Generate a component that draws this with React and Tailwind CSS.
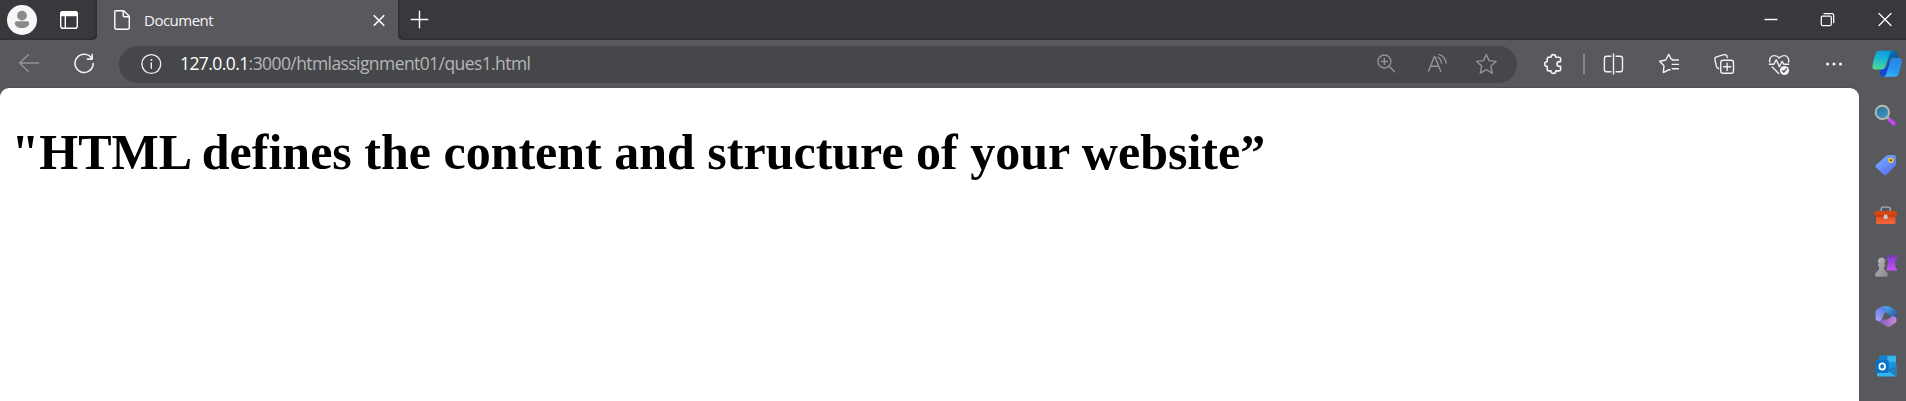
import React from "react";

function Icon({ className = "", children, width = 1.4 }) {
  return (
    <svg
      viewBox="0 0 24 24"
      className={`h-6 w-6 shrink-0 ${className}`}
      fill="none"
      stroke="currentColor"
      strokeWidth={width}
      strokeLinecap="round"
      strokeLinejoin="round"
    >
      {children}
    </svg>
  );
}

const STAR = "M12.3 2.5 L15.1 8.6 L22 9.4 L16.9 14.1 L18.3 21.2 L12.3 17.7 L6.3 21.2 L7.7 14.1 L2.6 9.4 L9.5 8.6 Z";

function TabStrip() {
  return (
    <div className="flex h-10 items-stretch bg-[#58595d] text-white">
      <div className="flex w-[97px] items-center rounded-br-[5px] bg-[#38393c] pl-[7px] shadow-[inset_-2px_-2px_2px_-1px_#2c2d30]">
        <svg viewBox="0 0 30 30" className="h-[30px] w-[30px] shrink-0">
          <circle cx="15" cy="15" r="15" fill="#f7f7f7" />
          <circle cx="15" cy="10.6" r="4.9" fill="#8a8a8a" />
          <path d="M9.7 16.2H20.3Q22.2 16.2 22.2 18C22.2 21.2 19 23 15 23S7.8 21.2 7.8 18Q7.8 16.2 9.7 16.2Z" fill="#8a8a8a" />
        </svg>
        <Icon className="ml-5">
          <rect x="3.7" y="3.7" width="16.6" height="16.6" rx="2.4" />
          <path d="M3.7 7.5V6Q3.7 3.7 6 3.7H18Q20.3 3.7 20.3 6V7.5Z" fill="currentColor" />
          <path d="M8.3 8V20" />
        </Icon>
      </div>
      <div className="flex w-[301px] items-center rounded-t-[5px] bg-[#58595d]">
        <Icon className="ml-[13px]">
          <path d="M5.8 2.7H13.7L19.3 8.3V19.3Q19.3 21.3 17.3 21.3H6.8Q4.8 21.3 4.8 19.3V3.7Q4.8 2.7 5.8 2.7ZM13.2 2.9V7.6Q13.2 8.8 14.4 8.8H19.1" />
        </Icon>
        <span className="ml-[10px] -translate-y-[0.5px] whitespace-nowrap font-['Open_Sans',sans-serif] text-[15px] leading-none tracking-[-0.5px] text-[#f5f5f5]">
          Document
        </span>
        <Icon className="mr-[7.5px] ml-auto translate-y-[0.5px]" width={1.6}>
          <path d="M7.2 7.2L16.8 16.8M16.8 7.2L7.2 16.8" />
        </Icon>
      </div>
      <div className="flex flex-1 items-center rounded-bl-[5px] bg-[#38393c] shadow-[inset_2px_-2px_2px_-1px_#2c2d30]">
        <Icon className="ml-[9px]">
          <path d="M12.5 3.3V19.7M4.2 11.5H20.8" />
        </Icon>
        <div className="mr-[9px] ml-auto flex gap-[33px]">
          <Icon className="-ml-px">
            <path d="M5.5 11.5H18.5" strokeLinecap="butt" />
          </Icon>
          <Icon width={1.25}>
            <rect x="5.3" y="8" width="10" height="9.5" rx="1.2" />
            <path d="M8 5.6H16Q17.7 5.6 17.7 7.3V14.7" />
          </Icon>
          <Icon width={1.25}>
            <path d="M6 5.5L18 17.5M18 5.5L6 17.5" />
          </Icon>
        </div>
      </div>
    </div>
  );
}

function AddressBar() {
  return (
    <div className="ml-[23px] flex h-[37px] w-[1398px] shrink-0 items-center rounded-full bg-[#46474a] pr-[19px] pl-5 text-[#929395]">
      <Icon className="text-[#ededed]">
        <circle cx="12.3" cy="12" r="9.4" />
        <path d="M12.3 11V16.2" />
        <circle cx="12.3" cy="7.9" r="0.5" fill="currentColor" strokeWidth="1" />
      </Icon>
      <span className="ml-[17px] whitespace-nowrap font-['Open_Sans',sans-serif] text-[17.5px] leading-none tracking-[-0.58px] text-[#b5b6b8]">
        <span className="text-white">127.0.0.1</span>:3000/htmlassignment01/ques1.html
      </span>
      <Icon className="ml-auto">
        <circle cx="10.4" cy="9.5" r="6.5" />
        <path d="M15.2 14.3L20.5 19.7M7.4 9.5H13.4M10.4 6.5V12.5" />
      </Icon>
      <Icon className="ml-[27px]">
        <path d="M3.5 19.2L9.3 4.7H9.9L15.7 19.2M5.6 14.3H13.5M12.9 5.4Q16 6.7 16.5 11M14.2 2.3Q20.3 4.4 21.1 11" />
      </Icon>
      <Icon className="ml-[25px]">
        <path d={STAR} />
      </Icon>
    </div>
  );
}

function CopilotLogo() {
  return (
    <svg viewBox="0 0 32 32" className="ml-[25px] h-8 w-8 shrink-0">
      <defs>
        <linearGradient id="cpA" x1="0.6" y1="0" x2="0.3" y2="1">
          <stop offset="0" stopColor="#0e9bdf" />
          <stop offset="0.4" stopColor="#17b3d3" />
          <stop offset="1" stopColor="#4ddb95" />
        </linearGradient>
        <linearGradient id="cpB" x1="0.7" y1="0" x2="0.3" y2="1">
          <stop offset="0" stopColor="#2a84e6" />
          <stop offset="0.6" stopColor="#2897ef" />
          <stop offset="1" stopColor="#35b8fa" />
        </linearGradient>
        <linearGradient id="cpC" x1="0" y1="0" x2="1" y2="1">
          <stop offset="0" stopColor="#0878bd" />
          <stop offset="1" stopColor="#084f92" />
        </linearGradient>
      </defs>
      <path d="M17 2.7H22Q25 2.7 26 5.7L27.2 10H21.5Q19.5 10 18.8 11.2L16.6 18Z" fill="url(#cpC)" />
      <path d="M8.6 20.3H12.5Q15.3 20.3 16 18L18 12 19.6 20 17.5 26Q16.6 28.8 13.7 28.8H12.8Q10 28.8 9.2 26Z" fill="#1746cf" />
      <path d="M8.2 2.7H22Q19.7 2.7 18.8 5.2L14.5 18.6Q13.6 21.6 10.3 21.6H4.4Q.8 21.6 1.5 17.5Q2.6 11.8 4.5 6Q5.5 2.7 8.2 2.7Z" fill="url(#cpA)" />
      <path d="M23.8 28.8H11.7Q14.4 28.8 15.3 26L19.3 13Q20.2 10 23.3 10H27.7Q31.6 10 30.8 14Q29.7 19.5 27.8 25.5Q26.8 28.8 23.8 28.8Z" fill="url(#cpB)" />
    </svg>
  );
}

function Toolbar() {
  return (
    <div className="flex h-12 items-center bg-[#58595d] pl-[17px] text-[#f2f2f2]">
      <Icon className="text-[#929396]">
        <path d="M21.7 11H2.7M11.2 2.7L2.7 11L11.2 19.5" />
      </Icon>
      <Icon className="ml-[31px]" width={1.6}>
        <path d="M19.8 6.5A9.1 9.1 0 1 0 21.2 11.5M20.2 2.5V7.1H15.4" />
      </Icon>
      <AddressBar />
      <Icon className="ml-6" width={1.6}>
        <path d="M6.8 5.2H10Q10 2.6 12.4 2.6T14.8 5.2H17.9Q19.6 5.2 19.6 6.9V9.6H18.4Q16 9.6 16 12T18.4 14.4H19.6V17.2Q19.6 18.9 17.9 18.9H14.8Q14.8 21.4 12.4 21.4T10 18.9H7.9Q6.2 18.9 6.2 17.2V14.3Q3.6 14.3 3.6 12T6.2 9.7V6.9Q6.2 5.2 7.9 5.2" />
      </Icon>
      <div className="ml-[18px] h-5 w-[1.5px] shrink-0 bg-[#88898c]" />
      <Icon className="ml-[16.5px]">
        <path d="M12.5 2V22M9.8 4.2H5.8Q3.4 4.2 3.4 6.6V17.4Q3.4 19.8 5.8 19.8H9.8M15.1 4.2H19.1Q21.5 4.2 21.5 6.6V17.4Q21.5 19.8 19.1 19.8H15.1" />
      </Icon>
      <Icon className="ml-8">
        <path d="M15.8 7.4L14.2 7.2L11.8 2.3L8.7 8L2.7 9.2L7 13.7L6.3 20.5L12.2 17.7L13 18M15.3 8H21.5M15.3 12.4H21.5M15.3 16.8H21.5" />
      </Icon>
      <Icon className="ml-[31px]">
        <rect x="8.7" y="8.3" width="12.8" height="13" rx="2.3" />
        <path d="M15.1 11.2V18.4M11.5 14.8H18.7M6.6 16.5Q4.9 16 4.4 14.2L2.9 7.7Q2.5 5.5 4.5 4.9L12 2.7Q14.5 2.1 15 4.4L15.3 5.5" />
      </Icon>
      <Icon className="ml-[31px]">
        <path d="M2.7 10C2.1 6 4.3 3.6 7.2 3.6C9.6 3.6 11.2 4.6 12.2 6C13.2 4.6 14.8 3.6 17.2 3.6C20.2 3.6 22.2 6 21.6 10M2.4 12.2H6.9L9.2 7.8L12.4 14.7L15.2 9.3L16.7 12.2H21.7M5.2 15L11.7 21.4" />
        <circle cx="17.5" cy="18.5" r="4.6" fill="currentColor" strokeWidth="0" />
        <path d="M15.5 18.7L16.8 20L19.5 17.1" stroke="#58595d" />
      </Icon>
      <Icon className="ml-[31px]" width={0}>
        <g fill="currentColor">
          <circle cx="5.6" cy="12" r="1.6" />
          <circle cx="12" cy="12" r="1.6" />
          <circle cx="18.5" cy="12" r="1.6" />
        </g>
      </Icon>
      <CopilotLogo />
    </div>
  );
}

function SidebarIcon({ children }) {
  return (
    <svg viewBox="0 0 24 24" className="h-6 w-6 shrink-0">
      {children}
    </svg>
  );
}

function Sidebar() {
  return (
    <aside className="flex w-[47px] shrink-0 flex-col gap-[26.3px] bg-[#58595d] pt-[15.5px] pl-[15px]">
      <SidebarIcon>
        <defs>
          <linearGradient id="lens" x1="0" y1="0" x2="0.6" y2="1">
            <stop offset="0" stopColor="#246b8c" />
            <stop offset="1" stopColor="#3e99c4" />
          </linearGradient>
        </defs>
        <path d="M13.5 13.5L16 16" stroke="#a5a5a5" strokeWidth="3" />
        <path d="M16.3 16.2L19.7 19.5" stroke="#c543f4" strokeWidth="4" strokeLinecap="round" />
        <circle cx="8.4" cy="8.4" r="6.7" fill="url(#lens)" stroke="#b8b8b7" strokeWidth="2" />
      </SidebarIcon>
      <SidebarIcon>
        <defs>
          <linearGradient id="tag" x1="0" y1="0" x2="1" y2="1">
            <stop offset="0" stopColor="#77b5ff" />
            <stop offset="1" stopColor="#5865ed" />
          </linearGradient>
        </defs>
        <path d="M12.5 1.8Q13.2 1.1 14.2 1.1L20 1Q22 1 22 3V10Q22 11 21.2 11.8L12.8 20.4Q11.2 22 9.6 20.4L2.2 13.7Q.6 12.1 2.2 10.7Z" fill="url(#tag)" />
        <circle cx="16.8" cy="6.2" r="1.9" fill="#333" stroke="#f4c62b" strokeWidth="1.7" />
      </SidebarIcon>
      <SidebarIcon>
        <defs>
          <linearGradient id="box" x1="0" y1="0" x2="0" y2="1">
            <stop offset="0" stopColor="#d34415" />
            <stop offset="1" stopColor="#f3683d" />
          </linearGradient>
        </defs>
        <path d="M7.2 7.4V4.8Q7.2 3.1 9 3.1H14.5Q16.3 3.1 16.3 4.8V7.4" fill="none" stroke="#a9abae" strokeWidth="1.4" />
        <rect x="2" y="9" width="19.5" height="11" rx="1.4" fill="url(#box)" />
        <rect x="0.6" y="7" width="22.3" height="5.2" rx="1" fill="#d74413" />
        <path d="M1.2 12H22.3" stroke="#a93005" strokeWidth="0.8" />
        <rect x="9.7" y="10.5" width="4" height="4.7" rx="1.8" fill="#c9c6c4" />
      </SidebarIcon>
      <SidebarIcon>
        <defs>
          <linearGradient id="rook" x1="0" y1="0" x2="0" y2="1">
            <stop offset="0" stopColor="#7d37c4" />
            <stop offset="1" stopColor="#c752fa" />
          </linearGradient>
          <linearGradient id="pawn" x1="0" y1="0" x2="1" y2="1">
            <stop offset="0" stopColor="#c0c0c0" />
            <stop offset="1" stopColor="#858585" />
          </linearGradient>
        </defs>
        <path d="M13 1H15.6V3.7H16.8V1H19.4V3.7H20.6V1H23.2V5.8L21 7.8L21.6 13.5L23 15V16.5H12.5L14.2 7.8L13 5.8Z" fill="url(#rook)" />
        <path d="M7.6 3.4A3.8 3.8 0 0 1 9.9 10.2H11.2V12.4H9.8Q9.8 15 11.3 16.8L13.8 19.5V21.3Q13.8 22.7 12.4 22.7H2.7Q1.3 22.7 1.3 21.3V19.5L3.9 16.8Q5.4 15 5.4 12.4H4V10.2H5.3A3.8 3.8 0 0 1 7.6 3.4Z" fill="url(#pawn)" />
      </SidebarIcon>
      <SidebarIcon>
        <defs>
          <linearGradient id="m1" x1="0.8" y1="0" x2="0.2" y2="1">
            <stop offset="0" stopColor="#5579dc" />
            <stop offset="1" stopColor="#a5a2f8" />
          </linearGradient>
          <linearGradient id="m2" x1="0" y1="0" x2="1" y2="1">
            <stop offset="0" stopColor="#46baf0" />
            <stop offset="1" stopColor="#24439d" />
          </linearGradient>
          <linearGradient id="m3" x1="0" y1="0" x2="1" y2="0">
            <stop offset="0" stopColor="#7b52b1" />
            <stop offset="1" stopColor="#c689dc" />
          </linearGradient>
        </defs>
        <path d="M9.2 1.2H14.2Q15.3 1.2 16.3 1.8L21 4.7Q22.5 5.6 22.5 7.4V15.3L16.3 13V10.3L9.2 6Z" fill="url(#m2)" />
        <path d="M9.2 1.2Q12.4 3 11.4 6.2L7.8 14.4Q6.2 17.3 3.2 15.8Q1.6 15 1.6 13.1V7Q1.6 5.2 3.1 4.3L7.5 1.6Q8.3 1.2 9.2 1.2Z" fill="url(#m1)" />
        <path d="M3 15.7Q6.2 16.8 7.8 14.4H13L18.6 11.3Q22.5 11.7 22.5 14.5V15.4Q22.5 17 21.2 17.9L16.5 21.2Q14.8 22.4 12.9 21.4Z" fill="url(#m3)" />
      </SidebarIcon>
      <SidebarIcon>
        <rect x="5" y="0.7" width="17" height="16" rx="1.2" fill="#1490df" />
        <path d="M5 1.9Q5 .7 6.2 .7H13.5V7H5Z" fill="#1683cf" />
        <path d="M13.5 .7H20.8Q22 .7 22 1.9V7H13.5Z" fill="#32b7ef" />
        <path d="M13.5 7H22V12H13.5Z" fill="#1a93dc" />
        <path d="M3 11L14 15.5L22.3 10.5V20Q22.3 21.5 20.8 21.5H4.5Q3 21.5 3 20Z" fill="#35b5ee" />
        <path d="M13.2 15.2L22.3 10.5V20Q22.3 21 21.7 21.2Z" fill="#1f82c0" />
        <rect x="1.7" y="5" width="13" height="13" rx="1.2" fill="#0872c7" />
        <ellipse cx="8.2" cy="11.4" rx="2.8" ry="3.1" fill="none" stroke="#fff" strokeWidth="1.8" />
      </SidebarIcon>
    </aside>
  );
}

export default function App() {
  return (
    <div className="flex h-[401px] w-[1906px] flex-col overflow-hidden bg-[#58595d]">
      <TabStrip />
      <Toolbar />
      <div className="flex min-h-0 flex-1">
        <main className="w-[1859px] shrink-0 rounded-t-[9px] bg-white pt-[34.5px] pl-[11.5px] shadow-[0_0_2px_#3c3d40]">
          <h1 className="whitespace-nowrap font-['Liberation_Serif',serif] text-[50px] leading-[58px] font-bold text-black">
            "HTML defines the content and structure of your website”
          </h1>
        </main>
        <Sidebar />
      </div>
    </div>
  );
}
